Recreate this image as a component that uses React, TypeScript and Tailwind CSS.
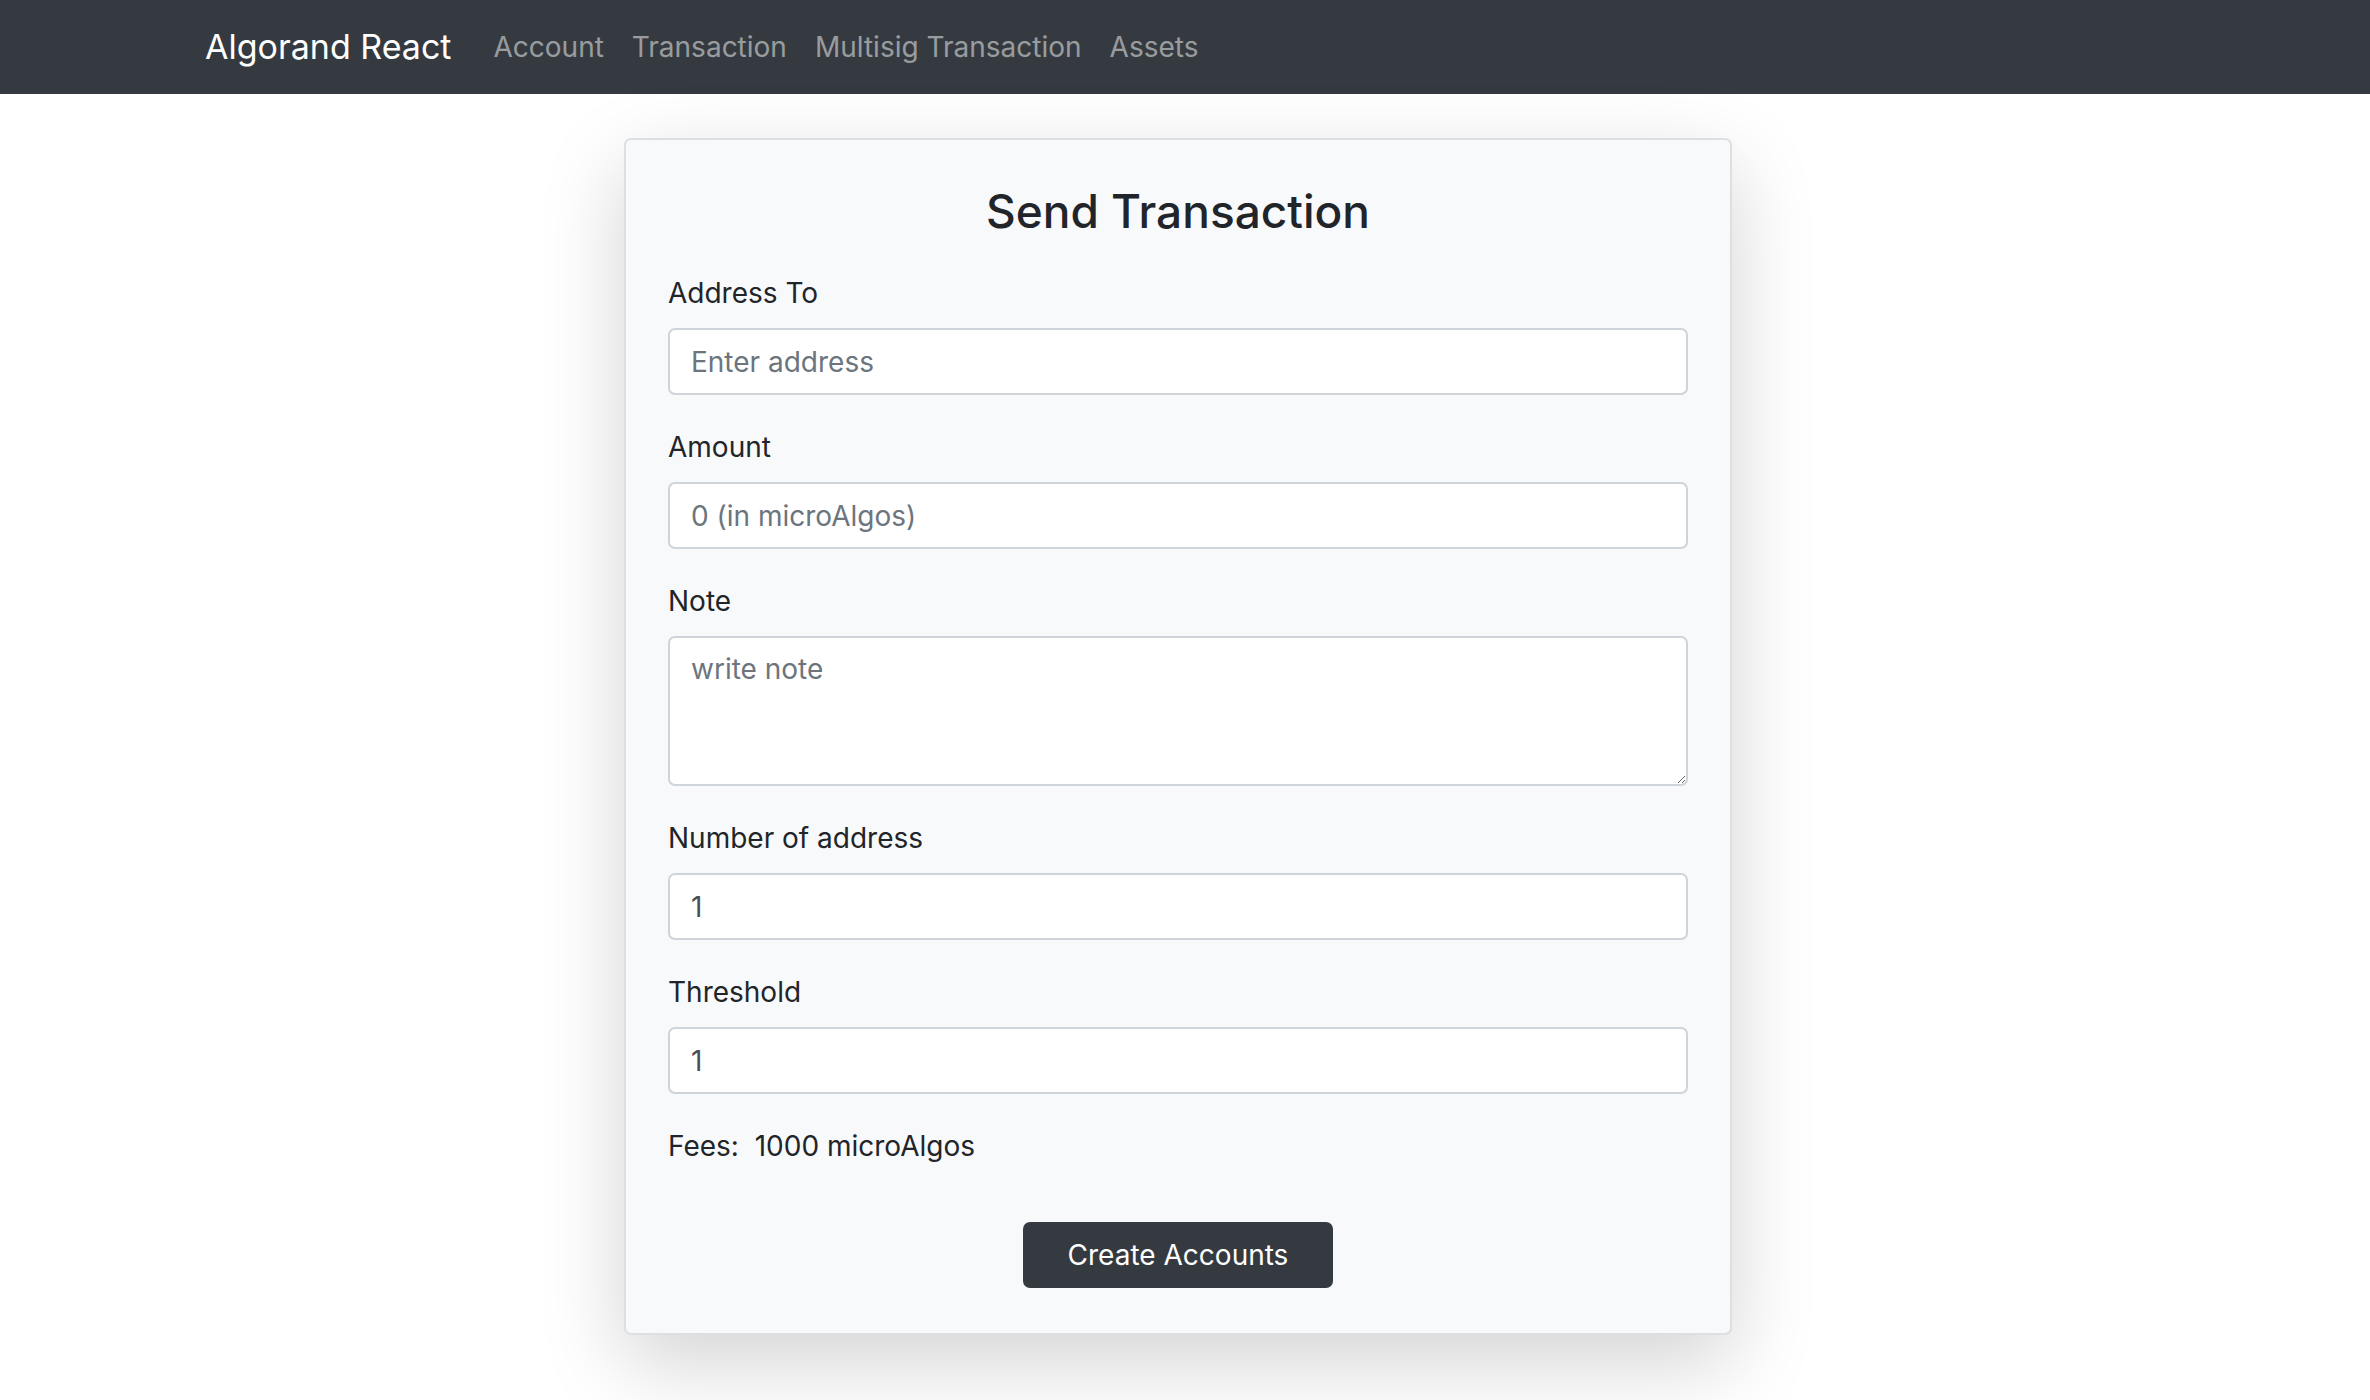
import React, { useState } from 'react';

const navLinks = ['Account', 'Transaction', 'Multisig Transaction', 'Assets'];

function Field({ label, children }: { label: string; children: React.ReactNode }) {
  return (
    <div className="mb-[31px]">
      <label className="block mb-[14px] text-[28px] leading-[42px] text-[#212529]">{label}</label>
      {children}
    </div>
  );
}

const inputCls =
  'block w-full h-[67px] px-[21px] bg-white border-2 border-[#ced4da] rounded-[7px] text-[28px] text-[#495057] placeholder:text-[#6c757d] outline-none';

export default function App() {
  const [address, setAddress] = useState('');
  const [amount, setAmount] = useState('');
  const [note, setNote] = useState('');
  const [count, setCount] = useState('1');
  const [threshold, setThreshold] = useState('1');

  return (
    <div className="min-h-screen bg-white" style={{ fontFamily: 'Inter, "Noto Sans", sans-serif' }}>
      <nav className="h-[94px] bg-[#343a40] flex items-center pl-[205px]">
        <a href="#" className="text-[34px] leading-[52px] text-white mr-[28px]">
          Algorand React
        </a>
        <ul className="flex items-center">
          {navLinks.map((l) => (
            <li key={l}>
              <a href="#" className="block px-[14px] text-[28px] leading-[42px] text-white/50">
                {l}
              </a>
            </li>
          ))}
        </ul>
      </nav>

      <div className="flex justify-center pr-[14px] mt-[44px]">
        <div className="w-[1108px] bg-[#f8f9fa] border-2 border-black/[0.1] rounded-[7px] px-[42px] pt-[42px] pb-[45px] shadow-[0_28px_84px_rgba(0,0,0,0.175)]">
          <h3 className="text-center text-[46px] leading-[59px] font-medium text-[#212529] mb-[31px]">
            Send Transaction
          </h3>

          <Field label="Address To">
            <input className={inputCls} placeholder="Enter address" value={address} onChange={(e) => setAddress(e.target.value)} />
          </Field>
          <Field label="Amount">
            <input className={inputCls} placeholder="0 (in microAlgos)" value={amount} onChange={(e) => setAmount(e.target.value)} />
          </Field>
          <Field label="Note">
            <textarea
              rows={3}
              className="block w-full h-[150px] px-[21px] py-[10px] bg-white border-2 border-[#ced4da] rounded-[7px] text-[28px] leading-[42px] text-[#495057] placeholder:text-[#6c757d] outline-none"
              placeholder="write note"
              value={note}
              onChange={(e) => setNote(e.target.value)}
            />
          </Field>
          <Field label="Number of address">
            <input className={inputCls} value={count} onChange={(e) => setCount(e.target.value)} />
          </Field>
          <Field label="Threshold">
            <input className={inputCls} value={threshold} onChange={(e) => setThreshold(e.target.value)} />
          </Field>

          <p className="text-[28px] leading-[42px] text-[#212529]">Fees:&nbsp; 1000 microAlgos</p>

          <div className="flex justify-center mt-[55px]">
            <button className="h-[66px] px-[45px] bg-[#343a40] text-white text-[28px] rounded-[7px]">
              Create Accounts
            </button>
          </div>
        </div>
      </div>
    </div>
  );
}
